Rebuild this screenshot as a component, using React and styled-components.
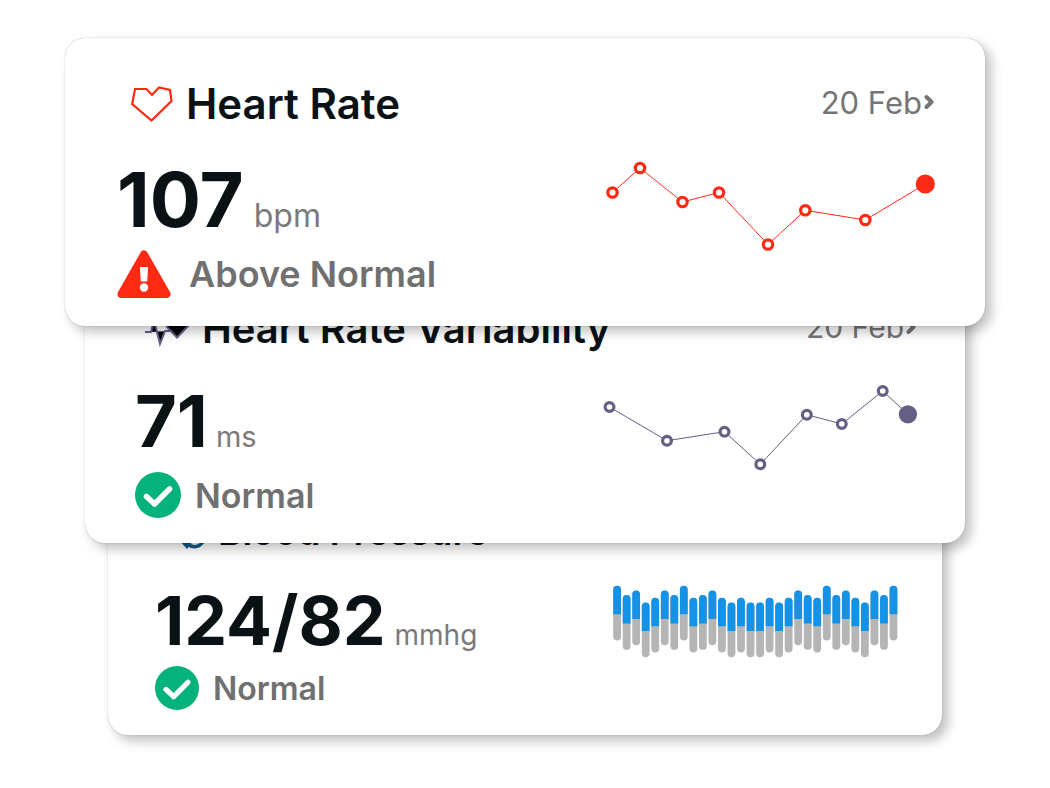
import React from "react";
import styled, { createGlobalStyle } from "styled-components";

const GlobalStyle = createGlobalStyle`
  * { box-sizing: border-box; }
  body {
    margin: 0;
    background: #ffffff;
    color: #0a1215;
    font-family: Inter, "Liberation Sans", sans-serif;
  }
  h2, p { margin: 0; }
  svg { display: block; flex: none; }
`;

const sizes = {
  large: {
    gutter: 65, overlap: 0, height: 288, padding: "42px 50px 27px 52px",
    indent: 14, titleSize: 42, titleLine: 48, bodyGap: 32, dateSize: 31,
    valueSize: 76, valueLine: 72, valueGap: 3, unitSize: 32, unitGap: 10,
    statusSize: 36, statusIcon: 48, statusGap: 15, labelGap: 18,
  },
  medium: {
    gutter: 85, overlap: -58, height: 275, padding: "38px 48px 25px 50px",
    indent: 10, titleSize: 40, titleLine: 46, bodyGap: 32, dateSize: 30,
    valueSize: 72, valueLine: 68, valueGap: 3, unitSize: 29, unitGap: 8,
    statusSize: 34, statusIcon: 46, statusGap: 17, labelGap: 14,
  },
  small: {
    gutter: 108, overlap: -69, height: 261, padding: "36px 44px 25px 47px",
    indent: 24, titleSize: 37, titleLine: 44, bodyGap: 30, dateSize: 28,
    valueSize: 68, valueLine: 64, valueGap: 4, unitSize: 28, unitGap: 9,
    statusSize: 32, statusIcon: 44, statusGap: 14, labelGap: 14,
  },
};

const Stack = styled.main`
  display: flex;
  flex-direction: column;
  padding: 38px 0 48px;
`;

const Card = styled.article`
  position: relative;
  z-index: ${(p) => p.$level};
  min-height: ${(p) => p.$s.height}px;
  margin: ${(p) => p.$s.overlap}px ${(p) => p.$s.gutter}px 0;
  padding: ${(p) => p.$s.padding};
  border-radius: 20px;
  background: #ffffff;
  box-shadow: 0 0 1px rgba(0, 0, 0, 0.4), 6px 6px 12px rgba(0, 0, 0, 0.25);
`;

const Header = styled.header`
  display: flex;
  align-items: center;
  justify-content: space-between;
  padding-left: ${(p) => p.$s.indent}px;
  height: ${(p) => p.$s.titleLine}px;
`;

const Title = styled.h2`
  display: flex;
  align-items: center;
  gap: 13px;
  font-size: ${(p) => p.$s.titleSize}px;
  line-height: ${(p) => p.$s.titleLine}px;
  font-weight: 600;
  white-space: nowrap;
`;

const DateLink = styled.a`
  display: flex;
  align-items: center;
  gap: 2px;
  padding-bottom: 4px;
  color: #757575;
  font-size: ${(p) => p.$s.dateSize}px;
  font-weight: 400;
  text-decoration: none;
  white-space: nowrap;
`;

const Body = styled.div`
  display: flex;
  align-items: flex-start;
  justify-content: space-between;
  margin-top: ${(p) => p.$s.bodyGap}px;
`;

const Reading = styled.p`
  display: flex;
  align-items: baseline;
  gap: ${(p) => p.$s.unitGap}px;
  margin-top: ${(p) => p.$s.valueGap}px;
  font-size: ${(p) => p.$s.valueSize}px;
  line-height: ${(p) => p.$s.valueLine}px;
  font-weight: 700;
`;

const Unit = styled.span`
  color: #7a7a7a;
  font-size: ${(p) => p.$s.unitSize}px;
  line-height: 1;
  font-weight: 400;
`;

const Status = styled.p`
  display: flex;
  align-items: center;
  gap: ${(p) => p.$s.labelGap}px;
  height: ${(p) => p.$s.statusIcon}px;
  margin-top: ${(p) => p.$s.statusGap}px;
  color: #707070;
  font-size: ${(p) => p.$s.statusSize}px;
  font-weight: 600;
  white-space: nowrap;
`;

const HeartIcon = () => (
  <svg width="42" height="38" viewBox="0 0 42 38" fill="none" stroke="#ff2a14" strokeWidth="2.2">
    <path d="M4 4H15.500L21 10L28 2.500L39 5L40.500 16L20.500 35.500L1.200 19Z" />
  </svg>
);

const PulseHeartIcon = () => (
  <svg width="44" height="38" viewBox="0 0 44 38" fill="#000000" stroke="#6a5f8c" strokeWidth="2">
    <path d="M22 17V5L28 2L33 6L38 2L43 6V16L32 27.500L22 17Z" />
    <path d="M0 22H6L9 10L15 34L20 21H26" />
  </svg>
);

const PressureIcon = () => (
  <svg width="26" height="34" viewBox="0 0 26 34" fill="none" stroke="#0b5f8a" strokeWidth="3.5">
    <path d="M3 24C1 10 9 3 14 2C20 8 26 15 25 25C21 33 14 33 8 29" />
    <path d="M0 25L8 34L14 26Z" fill="#0b5f8a" stroke="none" />
  </svg>
);

const Chevron = () => (
  <svg width="11" height="16" viewBox="0 0 11 16" fill="none" stroke="#757575" strokeWidth="4" strokeLinecap="round" strokeLinejoin="round">
    <path d="M2.500 3L7.500 8L2.500 13" />
  </svg>
);

const WarningIcon = ({ size }) => (
  <svg width={size + 6} height={size} viewBox="0 0 54 48">
    <path d="M27 4.500L49.500 44H4.500Z" fill="#ff2a14" stroke="#ff2a14" strokeWidth="8" strokeLinejoin="round" />
    <path d="M23.500 17.500H30.500L29.800 31H24.200Z" fill="#ffffff" stroke="#ffffff" strokeLinejoin="round" />
    <circle cx="27" cy="37.500" r="4.200" fill="#ffffff" />
  </svg>
);

const CheckIcon = ({ size }) => (
  <svg width={size} height={size} viewBox="0 0 46 46">
    <circle cx="23" cy="23" r="23" fill="#05b27c" />
    <path d="M11.500 24.500L19.500 32L34.500 17" fill="none" stroke="#ffffff" strokeWidth="5.500" strokeLinecap="round" strokeLinejoin="round" />
  </svg>
);

const LineChart = ({ width, height, color, points, dot, last, label }) => (
  <svg width={width} height={height} viewBox={`0 0 ${width} ${height}`} role="img" aria-label={label}>
    <polyline points={points.map((p) => p.join(",")).join(" ")} fill="none" stroke={color} strokeWidth="1" />
    {points.map(([x, y], i) =>
      i === points.length - 1 ? (
        <circle key={x} cx={x} cy={y} r={last} fill={color} />
      ) : (
        <circle key={x} cx={x} cy={y} r={dot} fill="#ffffff" stroke={color} strokeWidth="3.2" />
      )
    )}
  </svg>
);

const barTops = [
  0, 9.3, 4.7, 16.7, 12, 4.7, 9.3, 0, 12, 9.3, 4.7, 12, 16.7, 12, 16.7,
  16.7, 12, 16.7, 12, 4.7, 9.3, 12, 0, 9.3, 4.7, 12, 16.7, 4.7, 9.3, 0,
];

const BarChart = ({ label }) => (
  <svg width="285" height="74" viewBox="0 0 285 74" role="img" aria-label={label}>
    {barTops.map((top, i) => {
      const x = 0.2 + i * 9.53;
      const y = top + 1.800;
      return (
        <g key={i}>
          <rect x={x} y={y} width="7.8" height="54.7" rx="3.9" fill="#b5b5b5" />
          <path d={`M${x} ${y + 28.500}V${y + 3.900}a3.9 3.9 0 0 1 7.8 0V${y + 28.500}Z`} fill="#1492e6" />
        </g>
      );
    })}
  </svg>
);

function MetricCard({ size, level, icon, title, date, value, unit, statusIcon: StatusIcon, status, chart }) {
  const s = sizes[size];
  return (
    <Card $s={s} $level={level}>
      <Header $s={s}>
        <Title $s={s}>{icon}{title}</Title>
        {date && <DateLink $s={s} href="#history">{date}<Chevron /></DateLink>}
      </Header>
      <Body $s={s}>
        <div>
          <Reading $s={s}>{value}<Unit $s={s}>{unit}</Unit></Reading>
          <Status $s={s}><StatusIcon size={s.statusIcon} />{status}</Status>
        </div>
        {chart}
      </Body>
    </Card>
  );
}

export default function App() {
  return (
    <>
      <GlobalStyle />
      <Stack>
        <MetricCard
          size="large" level={3} icon={<HeartIcon />} title="Heart Rate" date="20 Feb"
          value="107" unit="bpm" statusIcon={WarningIcon} status="Above Normal"
          chart={
            <LineChart
              width={330} height={92} color="#ff2a14" dot={4.7} last={9.6} label="Heart rate history"
              points={[[7.5, 32.5], [35, 8], [77.5, 42], [114, 32.5], [163, 84.5], [200.3, 50.3], [260.3, 60], [320.3, 24]]}
            />
          }
        />
        <MetricCard
          size="medium" level={2} icon={<PulseHeartIcon />} title="Heart Rate Variability" date="20 Feb"
          value="71" unit="ms" statusIcon={CheckIcon} status="Normal"
          chart={
            <LineChart
              width={316} height={88} color="#665f85" dot={4.4} last={9.1} label="Heart rate variability history"
              points={[[8.5, 23], [66, 56.7], [123.5, 47.7], [159.3, 80.3], [205.8, 30.7], [240.8, 40], [281.7, 7], [306.9, 30.3]]}
            />
          }
        />
        <MetricCard
          size="small" level={1} icon={<PressureIcon />} title="Blood Pressure"
          value="124/82" unit="mmhg" statusIcon={CheckIcon} status="Normal"
          chart={<BarChart label="Blood pressure history" />}
        />
      </Stack>
    </>
  );
}
